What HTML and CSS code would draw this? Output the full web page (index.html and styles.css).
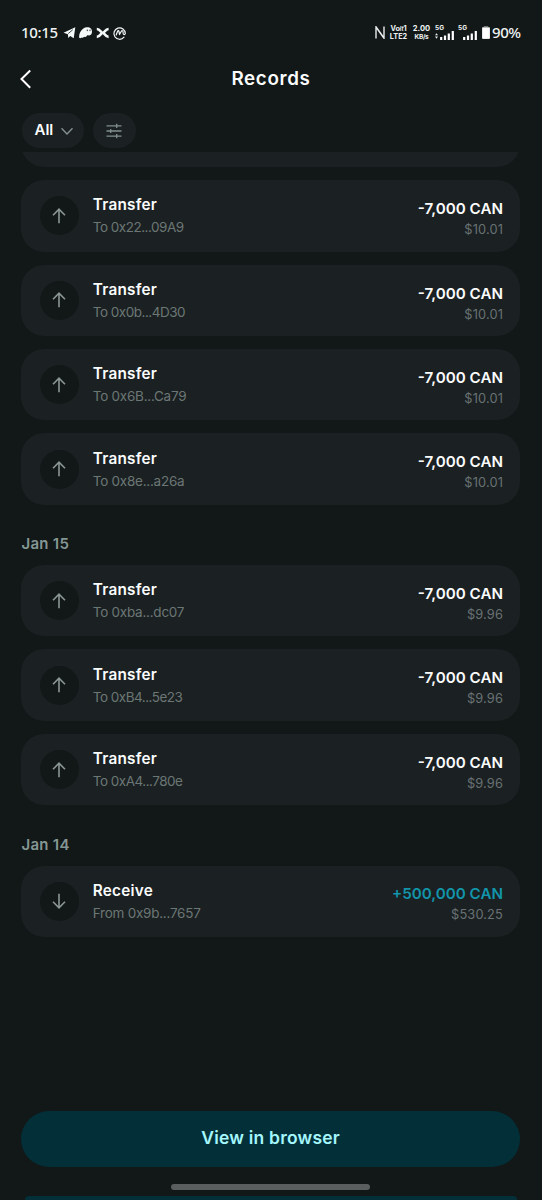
FILE: index.html
```
<!DOCTYPE html>
<html lang="en">
<head>
<meta charset="utf-8">
<title>Records</title>
<link rel="stylesheet" href="styles.css">
</head>
<body>
<svg width="0" height="0" class="defs"><defs>
<g id="arrow"><path d="M7 15.2V1.2M1 7.2 7 1.2l6 6" fill="none" stroke="currentColor" stroke-width="1.6"/></g>
</defs></svg>
<div class="screen">
  <div class="status">
    <span class="clock">10:15</span>
    <svg class="apps" width="66" height="16" viewBox="0 0 66 16">
      <path d="M.5 7.8 12.3 2.2 10.7 13.2 7.2 11 5.3 13.1 4.9 9.2z" fill="#f4f8f7"/>
      <path d="M5.200 8.600 9.800 4.700" stroke="#121717" stroke-width=".8"/>
      <path d="M16.200 12.700C15.600 9 18.500 2.400 24 2.200c3.300-.1 5.200 1.900 5 4.700-.1 2-1.200 3.200-2.800 3.500-1.200.2-1.600-.6-2.300.3-.7 1.200-1.700 1.700-2.800 1-.8 1.100-1.800 1.500-2.500.8-.7.6-1.700 1-2.400.2z" fill="#f4f8f7"/>
      <path d="M24.300 4.600v1.500M27 4.600v1.500" stroke="#121717" stroke-width=".9"/>
      <path d="M33.8 4C37.500 4 37.500 7.800 39.700 7.800S42 4 45.600 4M33.800 11.800C37.500 11.800 37.500 7.800 39.700 7.800S42 11.800 45.600 11.800" fill="none" stroke="#f4f8f7" stroke-width="2.700"/>
      <g fill="none" stroke="#f4f8f7" stroke-width="1.200" stroke-linejoin="round" stroke-linecap="round"><path d="M61 12.200A5.700 5.700 0 1 1 62.300 8.500C62 10 60.200 10 60.100 8.300V7.200C60 5.300 58.800 5.400 58.200 6.500L56.500 9.500 56 6.600C55.800 5.300 54.900 5.500 54.500 6.500L53.200 10"/></g>
    </svg>
    <svg class="nfc" width="10" height="13" viewBox="0 0 10 13"><path d="M1 12.500V.8L9 12V.5M1 3.500V1L9 12.300" fill="none" stroke="#e8eceb" stroke-width="1.400"/></svg>
    <span class="tiny volte"><span>Vo<i>lt</i>1</span><span>LTE2</span></span>
    <span class="tiny speed"><span class="num">2.00</span><span class="unit">KB/s</span></span>
    <span class="signal"><span>5G</span>
      <svg width="20" height="10" viewBox="0 0 20 10"><path d="M0 4.200 1.500 2.300 3 4.200zM0 5.500h3L1.500 7.700z" fill="#e8eceb"/><path d="M6.200 9V6M10 9V4.500M13.800 9V2.500M17.800 9V0" stroke="#fff" stroke-width="2.200"/></svg></span>
    <span class="signal second"><span>5G</span>
      <svg width="20" height="10" viewBox="0 0 20 10"><path d="M6.200 9V6M10 9V4.500M13.800 9V2.500M17.800 9V0" stroke="#fff" stroke-width="2.200"/></svg></span>
    <svg class="battery" width="8" height="13" viewBox="0 0 8 13"><path d="M2 .5h4M1.200 1.300h5.600Q8 1.300 8 2.500v9.300Q8 13 6.800 13H1.200Q0 13 0 11.800V2.500Q0 1.300 1.200 1.300" fill="#fff" stroke="#a8acab" stroke-width=".6"/></svg>
    <span class="percent">90%</span>
  </div>
  <header class="header">
    <svg class="back" width="12" height="20" viewBox="0 0 12 20"><path d="M10.200 1.500 1.500 10l8.700 8.700" fill="none" stroke="#fff" stroke-width="2"/></svg>
    <h1 class="title">Records</h1>
  </header>
  <div class="filters">
    <div class="pill all"><span>All</span><svg width="14" height="9" viewBox="0 0 14 9"><path d="M1.500 1.300 7 7l5.500-5.700" fill="none" stroke="#879391" stroke-width="1.300"/></svg></div>
    <div class="pill tune"><svg width="16" height="16" viewBox="0 0 16 16"><path d="M.5 2.800h15M.5 8h15M.5 13.200h15M10.700.7v4.200M4.700 5.900v4.200M10.700 11.100v4.200" fill="none" stroke="#82908d" stroke-width="1.300"/></svg></div>
  </div>
  <main class="list">
    <div class="clipped"></div>
    <section class="group">
      <article class="card"><span class="disc"><svg width="14" height="16"><use href="#arrow"/></svg></span><div class="info"><span class="kind">Transfer</span><span class="addr tight">To 0x22...09A9</span></div><div class="sum"><span class="amount">-7,000 CAN</span><span class="fiat">$10.01</span></div></article>
      <article class="card"><span class="disc"><svg width="14" height="16"><use href="#arrow"/></svg></span><div class="info"><span class="kind">Transfer</span><span class="addr tight">To 0x0b...4D30</span></div><div class="sum"><span class="amount">-7,000 CAN</span><span class="fiat">$10.01</span></div></article>
      <article class="card"><span class="disc"><svg width="14" height="16"><use href="#arrow"/></svg></span><div class="info"><span class="kind">Transfer</span><span class="addr">To 0x6B...Ca79</span></div><div class="sum"><span class="amount">-7,000 CAN</span><span class="fiat">$10.01</span></div></article>
      <article class="card"><span class="disc"><svg width="14" height="16"><use href="#arrow"/></svg></span><div class="info"><span class="kind">Transfer</span><span class="addr">To 0x8e...a26a</span></div><div class="sum"><span class="amount">-7,000 CAN</span><span class="fiat">$10.01</span></div></article>
    </section>
    <h2 class="day">Jan 15</h2>
    <section class="group">
      <article class="card"><span class="disc"><svg width="14" height="16"><use href="#arrow"/></svg></span><div class="info"><span class="kind">Transfer</span><span class="addr">To 0xba...dc07</span></div><div class="sum"><span class="amount">-7,000 CAN</span><span class="fiat">$9.96</span></div></article>
      <article class="card"><span class="disc"><svg width="14" height="16"><use href="#arrow"/></svg></span><div class="info"><span class="kind">Transfer</span><span class="addr tight">To 0xB4...5e23</span></div><div class="sum"><span class="amount">-7,000 CAN</span><span class="fiat">$9.96</span></div></article>
      <article class="card"><span class="disc"><svg width="14" height="16"><use href="#arrow"/></svg></span><div class="info"><span class="kind">Transfer</span><span class="addr tight">To 0xA4...780e</span></div><div class="sum"><span class="amount">-7,000 CAN</span><span class="fiat">$9.96</span></div></article>
    </section>
    <h2 class="day">Jan 14</h2>
    <section class="group">
      <article class="card"><span class="disc"><svg class="down" width="14" height="16"><use href="#arrow"/></svg></span><div class="info"><span class="kind">Receive</span><span class="addr">From 0x9b...7657</span></div><div class="sum"><span class="amount plus">+500,000 CAN</span><span class="fiat">$530.25</span></div></article>
    </section>
  </main>
  <footer class="footer">
    <div class="browse">View in browser</div>
    <div class="home"></div>
    <div class="strip"></div>
  </footer>
</div>
</body>
</html>
```
FILE: styles.css
```
* { box-sizing: border-box; }
body { margin: 0; background: #121717; font-family: Inter, "Liberation Sans", sans-serif; color: #fafcfc; }
svg { display: block; flex: none; }
.defs { position: absolute; }
.screen { width: 542px; height: 1200px; overflow: hidden; display: flex; flex-direction: column; }

.status { height: 56px; padding: 9px 0 0 21px; display: flex; align-items: center; flex: none; white-space: nowrap; color: #eef3f2; }
.clock { width: 42px; margin-top: -1px; font: 500 15px/20px "Noto Sans", sans-serif; letter-spacing: -.3px; }
.nfc { margin-left: 246px; }
.tiny { display: flex; flex-direction: column; align-items: center; font-weight: 700; font-size: 7.3px; line-height: 8px; }
.tiny i { font-size: 5.500px; }
.volte { margin-left: 5px; width: 17px; }
.speed { margin-left: 6px; width: 17px; }
.num { font-size: 7.600px; }
.unit { font-size: 6.500px; letter-spacing: -.3px; }
.signal { margin-left: 5px; width: 20px; font-weight: 700; font-size: 6.500px; line-height: 6px; height: 17px; }
.signal span { display: block; margin-top: 1px; }
.signal svg { margin-top: 0; }
.signal.second { margin-left: 3px; }
.signal.second svg { margin-left: 0; }
.battery { margin-left: 4px; }
.percent { margin-left: 2px; margin-top: -1px; font: 500 15px/20px "Noto Sans", sans-serif; letter-spacing: -.4px; }

.header { height: 46px; display: grid; grid-template-columns: 20px 1fr 20px; align-items: center; flex: none; }
.back { margin-left: 19.500px; margin-top: -1px; }
.title { margin: 0; text-align: center; font-size: 18.800px; line-height: 26px; font-weight: 600; letter-spacing: .65px; }

.filters { height: 50px; padding: 11px 21.500px 0; display: flex; gap: 8.500px; flex: none; }
.pill { height: 35px; border-radius: 18px; background: #1b2022; display: flex; align-items: center; }
.all { width: 62.500px; padding-left: 13px; gap: 7px; font-size: 15px; line-height: 20px; font-weight: 600; }
.all svg { margin-top: 1px; }
.all span { margin-top: -2px; }
.tune { width: 43.500px; justify-content: center; }

.list { height: 950px; padding: 0 22px 0 21.400px; flex: none; }
.clipped { height: 15px; margin-bottom: 13.200px; overflow: hidden; display: flex; align-items: flex-end; }
.clipped::before { content: ""; flex: 1; height: 71px; flex-shrink: 0; border-radius: 23px; background: #1b2022; }
.group { display: grid; gap: 13px; }
.card { height: 71.400px; border-radius: 23px; background: #1b2022; display: flex; align-items: center; padding: 0 17px 0 18.400px; }
.disc { width: 39px; height: 39px; border-radius: 50%; background: #121717; display: grid; place-items: center; color: #8b9794; flex: none; }
.down { transform: rotate(180deg); }
.info { margin: 1px 0 0 14px; display: grid; line-height: 22px; white-space: nowrap; }
.kind { font-size: 15.300px; font-weight: 600; letter-spacing: .25px; }
.addr { font-size: 13.500px; color: #6b7775; letter-spacing: -.25px; }
.tight { letter-spacing: -.5px; }
.sum { margin: 5.500px 0 0 auto; display: grid; text-align: right; white-space: nowrap; }
.amount { font-size: 15.200px; line-height: 22px; font-weight: 600; }
.plus { color: #1295aa; }
.fiat { font-size: 12.800px; line-height: 19px; color: #687274; letter-spacing: .15px; }
.day { margin: 0; height: 60.300px; padding-top: 28.500px; font-size: 15px; line-height: 21px; font-weight: 600; color: #849693; letter-spacing: .3px; }

.footer { height: 98px; padding: 8.500px .8px 0 0; display: flex; flex-direction: column; align-items: center; flex: none; }
.browse { width: 498.500px; height: 56.500px; border-radius: 29px; background: #033038; color: #a4f7fd; text-align: center; font-size: 17.500px; line-height: 54px; font-weight: 600; letter-spacing: .2px; flex: none; }
.home { width: 199px; height: 6px; margin-top: 17.200px; border-radius: 3px; background: #5a5e5e; flex: none; }
.strip { width: 492px; height: 4px; margin-top: 5.500px; border-radius: 4px 4px 0 0; background: #033038; flex: none; }
```
